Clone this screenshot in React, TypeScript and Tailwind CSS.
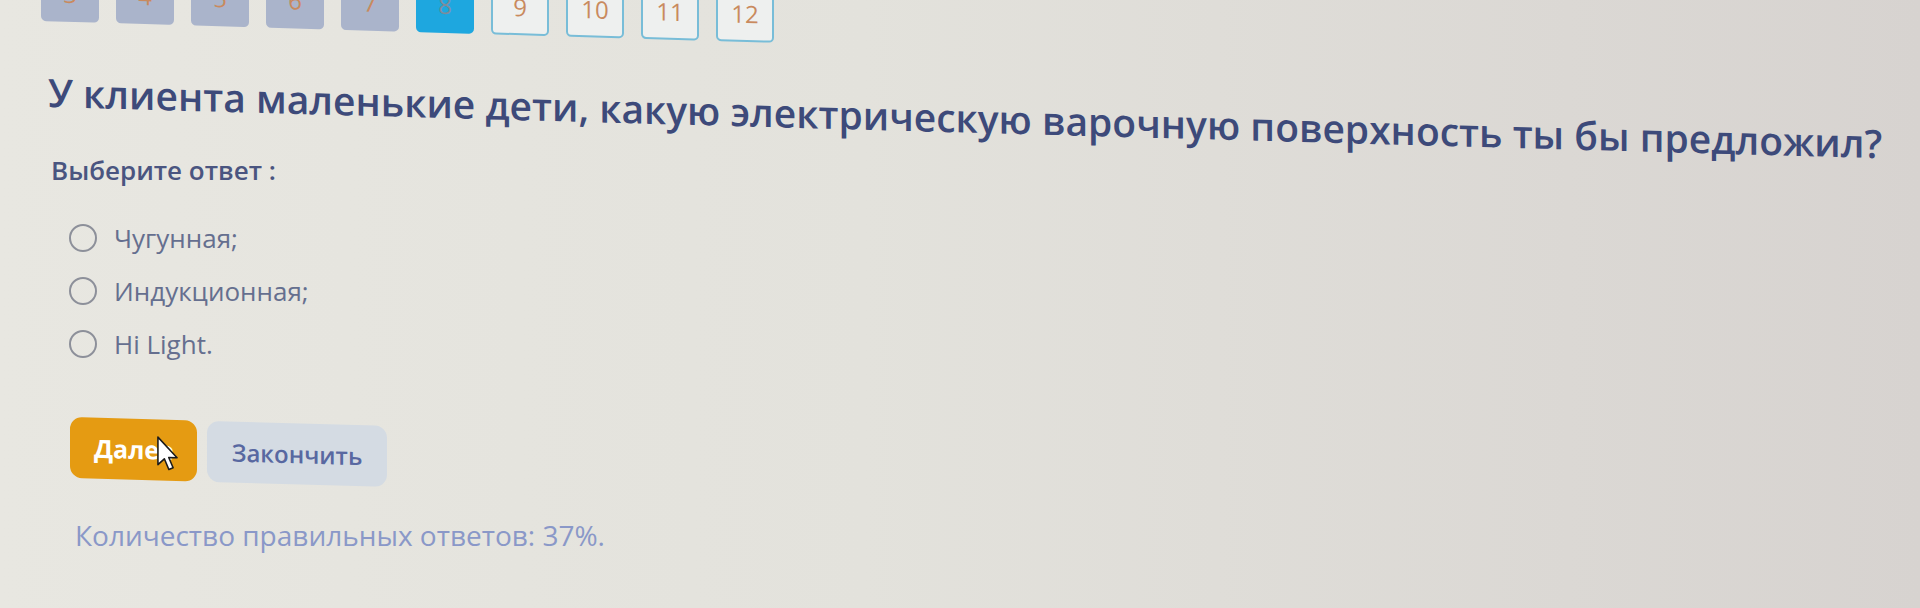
import React from 'react';

// номера вопросов, видимые в верхней полосе
const tiles = [3, 4, 5, 6, 7, 8, 9, 10, 11, 12];
const current = 8;

const answers = ['Чугунная;', 'Индукционная;', 'Hi Light.'];

function Tile({ n }: { n: number }) {
  let cls = 'bg-[#eef0ef] border-2 border-[#78bdd8] text-[#c98a5e]';
  if (n < current) cls = 'bg-[#aab4cb] text-[#c98a5e]';
  if (n === current) cls = 'bg-[#1ea7df] text-[#7d8c9c]';
  return (
    <div className={`flex h-[56px] w-[58px] shrink-0 items-center justify-center rounded-[5px] text-[24px] leading-none ${cls}`}>
      {n}
    </div>
  );
}

function Radio({ label }: { label: string }) {
  return (
    <label className="flex h-[53px] items-center gap-[17px]">
      <span className="h-[28px] w-[28px] shrink-0 rounded-full border-2 border-[#8d909a]" />
      <span className="text-[26px] leading-[26px] text-[#656f8f]">{label}</span>
    </label>
  );
}

function Cursor() {
  return (
    <svg
      className="pointer-events-none absolute left-[86px] top-[16px]"
      width="23"
      height="36"
      viewBox="0 0 20 32"
    >
      <path
        d="M1.5 1.5 L1.5 26 L7.2 20.6 L11.2 30 L15 28.4 L11.1 19.3 L18.5 19.3 Z"
        fill="#ffffff"
        stroke="#1b1b1b"
        strokeWidth="1.4"
        strokeLinejoin="round"
      />
    </svg>
  );
}

export default function App() {
  return (
    <div className="h-[608px] w-full overflow-hidden bg-[linear-gradient(90deg,#e8e7e1_0%,#e3e2dc_45%,#d7d3d0_100%)] font-['Open_Sans',sans-serif]">
      <div className="flex flex-col pl-[48px]">
        {/* навигация по вопросам */}
        <div className="-ml-[7px] -mt-[35px] flex origin-left skew-y-[1.7deg] gap-[17px]">
          {tiles.map((n) => (
            <Tile key={n} n={n} />
          ))}
        </div>

        <h1 className="mt-[51px] origin-left skew-y-[1.6deg] whitespace-nowrap text-[39px] font-semibold leading-[40px] text-[#3d4a7a]">
          У клиента маленькие дети, какую электрическую варочную поверхность ты бы предложил?
        </h1>

        <p className="ml-[3px] mt-[45px] text-[26px] font-semibold leading-[26px] text-[#4a5580]">
          Выберите ответ :
        </p>

        <div className="ml-[21px] mt-[28px] flex flex-col">
          {answers.map((a) => (
            <Radio key={a} label={a} />
          ))}
        </div>

        <div className="ml-[22px] mt-[47px] flex origin-left skew-y-[1.6deg] gap-[10px]">
          <button className="relative flex h-[61px] w-[127px] items-center rounded-[12px] bg-[#e59b12] pl-[24px] text-[25px] font-bold text-white">
            Далее
            <Cursor />
          </button>
          <button className="flex h-[61px] w-[180px] items-center justify-center rounded-[12px] bg-[#d4dbe3] text-[24px] font-semibold text-[#5868a1]">
            Закончить
          </button>
        </div>

        <p className="ml-[27px] mt-[43px] text-[28px] leading-[28px] text-[#8a98c8]">
          Количество правильных ответов: 37%.
        </p>
      </div>
    </div>
  );
}
